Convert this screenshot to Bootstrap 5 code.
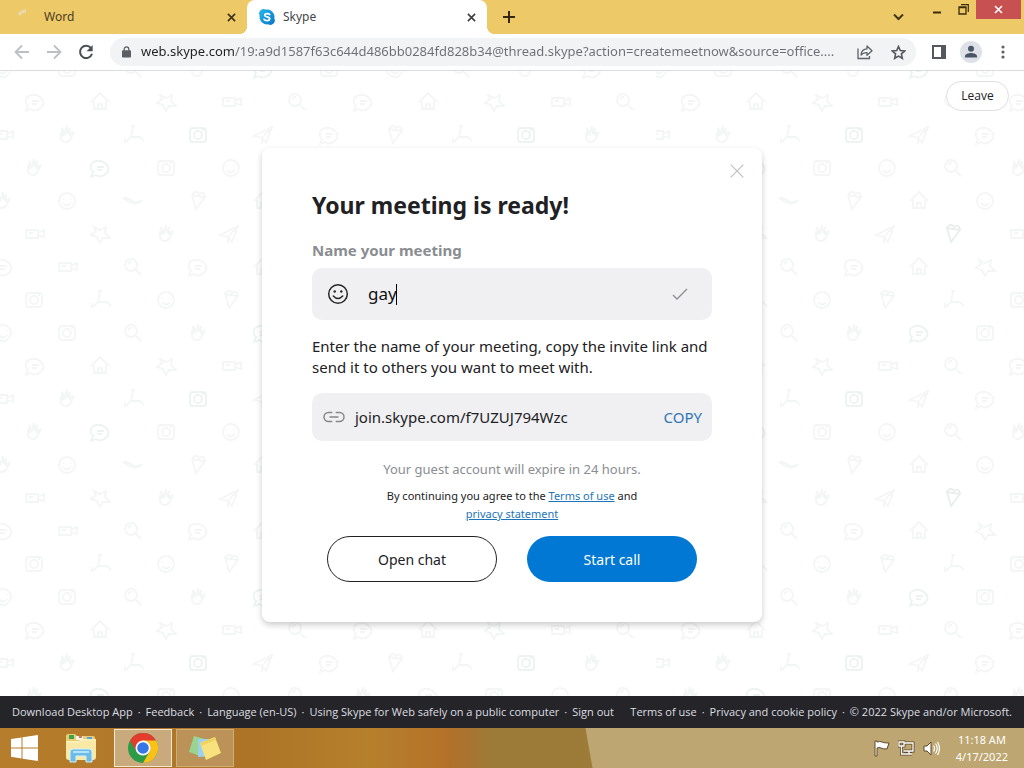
<!DOCTYPE html>
<html lang="en">
<head>
<meta charset="utf-8">
<meta name="viewport" content="width=device-width, initial-scale=1">
<title>Skype</title>
<link rel="stylesheet" href="https://cdn.jsdelivr.net/npm/bootstrap@5.3.0/dist/css/bootstrap.min.css">
<style>
  body { font-family: "Noto Sans", "Open Sans", sans-serif; color: #212124; background: #fff; }
  button { border: 0; background: none; padding: 0; color: inherit; }
  svg { display: block; flex: none; }

  .tabstrip { background: #eec967; height: 34px; font-size: 12px; color: #4a3d24; }
  .browser-tab { width: 240px; padding: 0 11px 0 12px; }
  .browser-tab.first { width: 247px; }
  .browser-tab.current { background: #fff; border-radius: 8px 8px 0 0; position: relative; color: #45474a; }
  .browser-tab.current::before, .browser-tab.current::after { content: ""; position: absolute; bottom: 0; width: 8px; height: 8px; }
  .browser-tab.current::before { left: -8px; background: radial-gradient(circle at 0 0, #eec967 8px, #fff 8px); }
  .browser-tab.current::after { right: -8px; background: radial-gradient(circle at 100% 0, #eec967 8px, #fff 8px); }
  .tab-search { padding: 0 8px; margin-right: 12px; }
  .win-btn { width: 26px; height: 19px; display: flex; justify-content: center; align-items: center; }
  .win-close { width: 45px; background: #c75050; margin-right: 3px; }

  .toolbar { height: 37px; border-bottom: 1px solid #dadce0; padding: 0 14px; color: #5f6368; }
  .omnibox { background: #f1f3f4; height: 28px; border-radius: 14px; padding: 0 10px 0 12px; gap: 10px; }
  .omnibox input { border: 0; outline: 0; padding: 0; font-size: 13px; min-width: 0;
    color: transparent; background: linear-gradient(to right, #202124 94px, #6b6f74 94px); background-clip: text; -webkit-background-clip: text; }
  .profile { width: 22px; height: 22px; border-radius: 50%; background: #dee1e8; overflow: hidden; margin: 0 14px; }

  .stage { padding: 27px 0 24px; }
  .doodles { position: absolute; top: 0; left: 0; width: 100%; height: 100%; }
  .leave { position: absolute; top: 10px; right: 15px; width: 63px; height: 30px; font-size: 12px; font-family: "Open Sans", sans-serif;
    background: #fff; border: 1px solid #dfdfe2; border-radius: 15px; }
  .meeting { width: 500px; max-width: 100%; padding: 40px 50px; background: #fff; border-radius: 8px; box-shadow: 0 3px 6px rgba(0,0,0,.2); position: relative; }
  .dismiss { position: absolute; top: 16px; right: 18px; }
  .meeting h1 { font-size: 23px; line-height: 34px; font-weight: 700; margin: 0 0 16px; }
  .meeting label { font-size: 15px; line-height: 24px; font-weight: 700; color: #8a8d91; margin-bottom: 6px; display: block; }
  .field { background: #f0f0f2; border-radius: 10px; }
  .field-name { height: 52px; padding: 0 24px 0 15px; }
  .name-box { margin-left: 19px; }
  .field-name input { border: 0; outline: 0; background: none; padding: 0; width: 100%; font-size: 17px; color: #111; caret-color: transparent; }
  .caret { position: absolute; left: 28px; top: 3px; width: 1px; height: 21px; background: #000; }
  .hint { font-size: 15px; line-height: 21px; margin: 16px 0 15px; }
  .field-link { height: 48px; padding: 0 10px 0 11px; font-size: 15px; gap: 10px; }
  .copy { color: #2f76b8; font-size: 15px; }
  .expire { font-size: 13px; line-height: 20px; color: #8a8d91; margin: 18px 0 8px; }
  .terms { font-size: 11px; line-height: 18px; width: 260px; margin: 0 auto 13px; }
  .terms a { color: #1e74b8; }
  .actions { padding: 0 15px; }
  .pill { width: 170px; height: 46px; border-radius: 23px; font-size: 14px; }
  .pill-line { border: 1px solid #212124; }
  .pill-blue { background: #0078d4; color: #fff; }

  .site-footer { background: #252529; min-height: 32px; padding: 0 12px; font-size: 11px; font-family: "Open Sans", sans-serif; }
  .site-footer nav { gap: 5px; }
  .site-footer a, .site-footer span { color: #dcdde0; text-decoration: none; white-space: nowrap; }

  .taskbar { position: relative; height: 40px; color: #fff;
    background: linear-gradient(80deg, transparent 0 583px, #bda671 584px) , linear-gradient(90deg, #b67d2c 0, #ad7427 25%, #b5802c 36%, #b5732a 43%, #b17029 44%, #9c7b39 48.2%, #9f7c38 100%); }
  .start { padding: 0 11px; }
  .tasks { gap: 4px; margin-left: 3px; }
  .task { width: 58px; height: 38px; display: flex; align-items: center; justify-content: center; border: 1px solid transparent; }
  .task-open { border-color: #d0ac77; background: #bb9257; }
  .task-active { border-color: #f5e9d4; background: #c8aa7c; }
  .clock { font-size: 11px; line-height: 17px; text-align: center; }
</style>
</head>
<body class="d-flex flex-column min-vh-100">

<header>
  <div class="tabstrip d-flex">
    <div class="browser-tab first d-flex align-items-center">
      <svg width="20" height="20" viewBox="0 0 20 20"><path d="M7 8q2-4 7-4" stroke="#ead9b0" stroke-width="3" fill="none"/></svg>
      <a href="#" class="flex-grow-1 text-reset text-decoration-none ms-2 ps-1">Word</a>
      <button type="button" aria-label="Close Word tab"><svg width="9" height="9" viewBox="0 0 10 10"><path d="M1 1l8 8M9 1L1 9" stroke="#3d321b" stroke-width="1.800"/></svg></button>
    </div>
    <div class="browser-tab current d-flex align-items-center">
      <svg width="16" height="16" viewBox="0 0 16 16"><defs><linearGradient id="sk" x2="1" y2="1"><stop stop-color="#28b9ee"/><stop offset="1" stop-color="#0873c8"/></linearGradient></defs><path d="M4.500 0a4.500 4.500 0 0 1 2.300.600A7.300 7.300 0 0 1 15.300 9.200 4.500 4.500 0 0 1 9.200 15.300 7.300 7.300 0 0 1 .700 6.800 4.500 4.500 0 0 1 4.500 0z" fill="url(#sk)"/><path d="M10.700 5.600C10 4.400 5.700 4.100 5.700 6.200c0 2.400 5 1 5 3.600 0 2.300-4.700 2.200-5.600.5" fill="none" stroke="#fff" stroke-width="1.700" stroke-linecap="round"/></svg>
      <a href="#" class="flex-grow-1 text-reset text-decoration-none ms-2">Skype</a>
      <button type="button" aria-label="Close Skype tab"><svg width="9" height="9" viewBox="0 0 10 10"><path d="M1 1l8 8M9 1L1 9" stroke="#3c4043" stroke-width="1.800"/></svg></button>
    </div>
    <button type="button" class="ms-3" aria-label="New tab"><svg width="12" height="12" viewBox="0 0 12 12"><path d="M6 0v12M0 6h12" stroke="#33280f" stroke-width="2"/></svg></button>
    <div class="ms-auto d-flex">
      <button type="button" class="tab-search" aria-label="Search tabs"><svg width="11" height="8" viewBox="0 0 11 8"><path d="M1 1.500l4.500 4.500L10 1.500" stroke="#42351b" stroke-width="2" fill="none"/></svg></button>
      <button type="button" class="win-btn" aria-label="Minimize"><svg width="10" height="10" viewBox="0 0 10 10"><path d="M1 7.500h8" stroke="#3a2c0c" stroke-width="2"/></svg></button>
      <button type="button" class="win-btn" aria-label="Restore"><svg width="11" height="11" viewBox="0 0 11 11"><path d="M1 3.500h7v6.500H1zM.5 3h8" stroke="#3a2c0c" stroke-width="1.300" fill="none"/><path d="M3 .7h7.300V8" stroke="#3a2c0c" stroke-width="1.200" fill="none"/></svg></button>
      <button type="button" class="win-btn win-close" aria-label="Close window"><svg width="9" height="9" viewBox="0 0 9 9"><path d="M1 1l7 7M8 1L1 8" stroke="#fff" stroke-width="1.600"/></svg></button>
    </div>
  </div>

  <div class="toolbar d-flex align-items-center">
    <button type="button" aria-label="Back"><svg width="16" height="16" viewBox="0 0 16 16"><path d="M15 8H2M8 1.500L1.500 8 8 14.500" fill="none" stroke="#bdbfc3" stroke-width="1.800"/></svg></button>
    <button type="button" class="ms-3" aria-label="Forward"><svg width="16" height="16" viewBox="0 0 16 16"><path d="M1 8h13M8 1.500L14.500 8 8 14.500" fill="none" stroke="#bdbfc3" stroke-width="1.800"/></svg></button>
    <button type="button" class="mx-3" aria-label="Reload"><svg width="16" height="16" viewBox="0 0 16 16"><path d="M13 4.200A6.100 6.100 0 1 0 14 9.700" fill="none" stroke="#4c5054" stroke-width="2"/><path d="M14.700 1v6.200H8.500z" fill="#4c5054"/></svg></button>
    <div class="omnibox d-flex align-items-center flex-grow-1">
      <svg width="9" height="12" viewBox="0 0 10 13"><rect y="4.500" width="10" height="8" rx="1" fill="#5b5f63"/><path d="M2.500 5V3.200a2.500 2.500 0 0 1 5 0V5" fill="none" stroke="#5b5f63" stroke-width="1.400"/></svg>
      <input type="text" class="flex-grow-1" aria-label="Address" value="web.skype.com/19:a9d1587f63c644d486bb0284fd828b34@thread.skype?action=createmeetnow&amp;source=office....">
      <button type="button" aria-label="Share"><svg width="16" height="16" viewBox="0 0 16 16"><path d="M1 4.500V14.500h11.500V12" fill="none" stroke="#5f6368" stroke-width="1.300"/><path d="M4 11c.3-4 2.400-6 6-6.200V2l5 4.700-5 4.600V8.600c-3 0-4.700.6-6 2.400z" fill="none" stroke="#5f6368" stroke-width="1.300" stroke-linejoin="round"/></svg></button>
      <button type="button" class="ms-2" aria-label="Bookmark"><svg width="15" height="15" viewBox="0 0 16 16"><path d="M8 1.600l1.900 4.300 4.700.5-3.500 3.100 1 4.700L8 11.800l-4.100 2.400 1-4.700L1.400 6.400l4.700-.5z" fill="none" stroke="#54585c" stroke-width="1.700"/></svg></button>
    </div>
    <button type="button" class="ms-3" aria-label="Side panel"><svg width="14" height="14" viewBox="0 0 14 14"><path d="M1 1h12v12H1z" fill="none" stroke="#55585c" stroke-width="2"/><path d="M9 0h5v14H9z" fill="#55585c"/></svg></button>
    <button type="button" class="profile" aria-label="Profile"><svg width="22" height="22" viewBox="0 0 22 22"><circle cx="11" cy="7.700" r="3" fill="#4a5568"/><path d="M5 16.500v-1.300c0-2.200 3.500-3.200 6-3.200s6 1 6 3.200v1.300z" fill="#4a5568"/></svg></button>
    <button type="button" aria-label="Menu"><svg width="14" height="14" viewBox="0 0 14 14"><g fill="#5f6368"><circle cx="7" cy="2" r="1.600"/><circle cx="7" cy="7" r="1.600"/><circle cx="7" cy="12" r="1.600"/></g></svg></button>
  </div>
</header>

<main class="stage position-relative flex-grow-1 d-flex align-items-center justify-content-center">
  <svg class="doodles" aria-hidden="true">
    <defs>
      <g id="chat"><path d="M-8-5q8-5 14 1t-2 11q-4 3-8 0l-5 2 2-5q-4-4-1-9M-3-1h7M-3 2h5"/></g>
      <g id="house"><path d="M-9 0L0-9 9 0M-6-1v8H6v-8M-2 7V2h4v5"/></g>
      <g id="star"><path d="M-6-7l6 3 6-3-1 6 5 5-7 0-3 5-3-6-6-2 5-4z"/></g>
      <g id="cam"><path d="M-8-4H4v8H-8zM4-1l6-3v7L4 1M-5-1h4"/></g>
      <g id="lens"><circle cx="-2" cy="-2" r="6"/><path d="M3 3l5 5M-5-3q2-3 4-2"/></g>
      <g id="face"><circle r="8"/><path d="M-4-2h1M3-2h1M-4 2q4 5 8 0"/></g>
      <g id="plane"><path d="M-9 1L9-8 3 8-1 3zM-1 3L9-8M-1 3v6"/></g>
      <g id="photo"><rect x="-8" y="-7" width="16" height="14" rx="3"/><circle r="4"/><path d="M4-5h2"/></g>
      <g id="cone"><path d="M-6-6L-2 8 7-4zM-6-6q4-6 7-1 5-4 6 3"/></g>
      <g id="wave"><path d="M-10-3q6 0 9 3t10-1q-5 5-10 3t-9-5"/></g>
      <g id="branch"><path d="M0-9L-2 2l-5 5M-2 2l9 0 4 4M-2-9h4M-8 3v5"/></g>
      <g id="hand"><path d="M-6-3v7q4 6 9 1l4-8-4 3V-7l-2 6-1-8-2 8-3-6 1 8z"/></g>
      <pattern id="tile" x="0" y="14" width="656" height="264" patternUnits="userSpaceOnUse">
        <g fill="none" stroke="#f4f5f5" stroke-width="1.800">
          <use href="#chat" x="35" y="17"/><use href="#house" x="100" y="17"/><use href="#star" x="166" y="17"/><use href="#cam" x="231" y="17"/><use href="#lens" x="297" y="17"/><use href="#chat" x="363" y="17"/><use href="#house" x="428" y="17"/><use href="#star" x="494" y="17"/><use href="#cam" x="560" y="17"/><use href="#lens" x="625" y="17"/>
          <use href="#cam" x="3" y="50"/><use href="#hand" x="67" y="50"/><use href="#branch" x="133" y="50"/><use href="#photo" x="198" y="50" stroke="#eff2f2"/><use href="#plane" x="263" y="50"/><use href="#chat" x="329" y="50"/><use href="#cone" x="395" y="50"/><use href="#branch" x="461" y="50"/><use href="#photo" x="526" y="50" stroke="#eff2f2"/><use href="#hand" x="592" y="50"/>
          <use href="#hand" x="34" y="83"/><use href="#chat" x="100" y="83" stroke="#eff2f2"/><use href="#photo" x="166" y="83"/><use href="#face" x="231" y="83"/><use href="#lens" x="297" y="83"/><use href="#hand" x="363" y="83"/><use href="#chat" x="428" y="83"/><use href="#photo" x="494" y="83"/><use href="#face" x="560" y="83"/><use href="#lens" x="625" y="83"/>
          <use href="#hand" x="3" y="116"/><use href="#face" x="67" y="116"/><use href="#wave" x="133" y="116"/><use href="#cone" x="198" y="116"/><use href="#house" x="263" y="116"/><use href="#face" x="329" y="116"/><use href="#wave" x="395" y="116"/><use href="#cone" x="461" y="116"/><use href="#branch" x="526" y="116"/><use href="#lens" x="592" y="116"/>
          <use href="#cam" x="34" y="149"/><use href="#star" x="100" y="149"/><use href="#hand" x="166" y="149"/><use href="#plane" x="229" y="149"/><use href="#cone" x="297" y="149" stroke="#e8eeed"/><use href="#cam" x="363" y="149"/><use href="#star" x="428" y="149"/><use href="#hand" x="494" y="149"/><use href="#plane" x="560" y="149"/><use href="#cone" x="625" y="149"/>
          <use href="#chat" x="3" y="182"/><use href="#cam" x="67" y="182"/><use href="#lens" x="133" y="182"/><use href="#chat" x="198" y="182"/><use href="#house" x="263" y="182"/><use href="#star" x="329" y="182"/><use href="#cam" x="395" y="182"/><use href="#lens" x="461" y="182"/><use href="#chat" x="526" y="182"/><use href="#house" x="592" y="182"/>
          <use href="#photo" x="34" y="215"/><use href="#branch" x="100" y="215"/><use href="#face" x="166" y="215"/><use href="#cone" x="231" y="215"/><use href="#branch" x="297" y="215"/><use href="#photo" x="363" y="215"/><use href="#plane" x="428" y="215"/><use href="#face" x="494" y="215"/><use href="#hand" x="560" y="215"/><use href="#branch" x="625" y="215"/>
          <use href="#face" x="3" y="248"/><use href="#photo" x="67" y="248"/><use href="#lens" x="133" y="248"/><use href="#hand" x="198" y="248"/><use href="#chat" x="263" y="248" stroke="#eff2f2"/><use href="#photo" x="329" y="248"/><use href="#face" x="395" y="248"/><use href="#lens" x="461" y="248"/><use href="#hand" x="526" y="248"/><use href="#chat" x="592" y="248"/>
        </g>
      </pattern>
    </defs>
    <rect width="100%" height="100%" fill="url(#tile)"/>
  </svg>
  <button type="button" class="leave">Leave</button>

  <section class="meeting" role="dialog" aria-labelledby="meeting-title">
    <button type="button" class="dismiss" aria-label="Close"><svg width="14" height="14" viewBox="0 0 14 14"><path d="M.7.7l12.600 12.600M13.300.7L.7 13.300" stroke="#bfc0c2" stroke-width="1.200"/></svg></button>
    <h1 id="meeting-title">Your meeting is ready!</h1>
    <label for="meeting-name">Name your meeting</label>
    <div class="field field-name d-flex align-items-center">
      <svg width="22" height="22" viewBox="0 0 22 22"><circle cx="11" cy="11" r="9.300" fill="none" stroke="#26262a" stroke-width="1.500"/><circle cx="7.700" cy="8.500" r="1.200" fill="#26262a"/><circle cx="14.300" cy="8.500" r="1.200" fill="#26262a"/><path d="M6.300 13q4.700 5 9.400 0" fill="none" stroke="#26262a" stroke-width="1.500" stroke-linecap="round"/></svg>
      <div class="name-box position-relative flex-grow-1">
        <input type="text" id="meeting-name" value="gay"><span class="caret"></span>
      </div>
      <svg width="16" height="12" viewBox="0 0 16 12"><path d="M1 7l4 4L15 1" fill="none" stroke="#8a8d91" stroke-width="1.300"/></svg>
    </div>
    <p class="hint">Enter the name of your meeting, copy the invite link and send it to others you want to meet with.</p>
    <div class="field field-link d-flex align-items-center">
      <svg width="22" height="12" viewBox="0 0 22 12"><path d="M9.300 1.500H5.500a4.500 4.500 0 0 0 0 9h3.800M12.700 1.500h3.800a4.500 4.500 0 0 1 0 9h-3.800M6.500 6h9" fill="none" stroke="#85878b" stroke-width="1.500"/></svg>
      <span class="flex-grow-1">join.skype.com/f7UZUJ794Wzc</span>
      <button type="button" class="copy">COPY</button>
    </div>
    <p class="expire text-center">Your guest account will expire in 24 hours.</p>
    <p class="terms text-center">By continuing you agree to the <a href="#">Terms of use</a> and <a href="#">privacy statement</a></p>
    <div class="actions d-flex justify-content-between">
      <button type="button" class="pill pill-line">Open chat</button>
      <button type="button" class="pill pill-blue">Start call</button>
    </div>
  </section>
</main>

<footer>
  <div class="site-footer d-flex flex-wrap align-items-center justify-content-between">
    <nav class="d-flex flex-wrap" aria-label="Skype">
      <a href="#">Download Desktop App</a><span>·</span><a href="#">Feedback</a><span>·</span><a href="#">Language (en-US)</a><span>·</span><a href="#">Using Skype for Web safely on a public computer</a><span>·</span><a href="#">Sign out</a>
    </nav>
    <nav class="d-flex flex-wrap" aria-label="Legal">
      <a href="#">Terms of use</a><span>·</span><a href="#">Privacy and cookie policy</a><span>·</span><span>© 2022 Skype and/or Microsoft.</span>
    </nav>
  </div>
  <div class="taskbar d-flex align-items-center">
    <button type="button" class="start" aria-label="Start"><svg width="27" height="26" viewBox="0 0 27 26"><path d="M0 4l10.500-1.600v10H0zM11.500 2.200L27 0v12.400H11.500zM0 13.400h10.500v10L0 21.800zM11.500 13.400H27V26l-15.500-2.300z" fill="#fff"/></svg></button>
    <div class="tasks d-flex">
    <button type="button" class="task" aria-label="File Explorer"><svg width="32" height="30" viewBox="0 0 32 30"><path d="M1 3q0-2 2-2h7l2 2h16q2 0 2 2v19q0 2-2 2H3q-2 0-2-2z" fill="#e8ce73"/><path d="M4 2h5v4H4z" fill="#3fa14d"/><path d="M11 3h7v4h-7z" fill="#f8f5e8"/><path d="M14 4h3" stroke="#c05030" stroke-width="1.500"/><path d="M22 4h5v4h-5z" fill="#58a5dc"/><path d="M1 8h13l3-2h14v18q0 3-3 3H4q-3 0-3-3z" fill="#fae9a4"/><path d="M2 9h12l3-2h13" stroke="#fff6cd" fill="none"/><path d="M5 29V19q0-3 3-3h16q3 0 3 3v10h-6v-6H11v6z" fill="#6cbce8" stroke="#d4f0fc"/><path d="M8 19h16" stroke="#b5e4fa" stroke-width="2"/></svg></button>
    <button type="button" class="task task-active" aria-label="Google Chrome"><svg width="30" height="30" viewBox="0 0 30 30"><circle cx="15" cy="15" r="15" fill="#2c9b47"/><path d="M2 7.500A15 15 0 0 1 28 7.500L15 9z" fill="#e33b2e"/><path d="M2 7.500L8.500 18.700 15 8z" fill="#e33b2e"/><path d="M28 7.500H15l6.500 11.200L15 30A15 15 0 0 0 28 7.500z" fill="#fbc116"/><circle cx="15" cy="15" r="7.500" fill="#fff"/><circle cx="15" cy="15" r="5.800" fill="#3577e5"/></svg></button>
    <button type="button" class="task task-open" aria-label="Sticky Notes"><svg width="34" height="28" viewBox="0 0 34 28"><path d="M6 2l14 4-5 17-14-5z" fill="#99d493"/><path d="M10 5l13 0 1 17-14 1z" fill="#9cd0ed"/><path d="M12 9l15-6 6 16-15 7z" fill="#f7e27d"/><path d="M12 9l15-6 1 3-15 6z" fill="#eed362"/></svg></button>
    </div>
    <div class="ms-auto d-flex align-items-center me-3">
      <svg class="me-2" width="17" height="17" viewBox="0 0 17 17"><path d="M2 1h2v1q3-1 5 0t7 1l-2 6q-4 0-6-1T4 8v8H2z" fill="#fff" stroke="#5e4b2c"/></svg>
      <svg class="me-2" width="17" height="17" viewBox="0 0 17 17"><path d="M6 3h9v8H6M8 14h6M11 11v3M1 2h5v4H1zM3.500 6v8H8" fill="none" stroke="#5e4b2c" stroke-width="3"/><path d="M6 3h9v8H6M8 14h6M11 11v3M1 2h5v4H1zM3.500 6v8H8" fill="none" stroke="#fff" stroke-width="1.300"/></svg>
      <svg class="me-3" width="17" height="17" viewBox="0 0 17 17"><path d="M1 6h3l4-4v13l-4-4H1z" fill="#fff" stroke="#5e4b2c"/><path d="M10.500 5.500q2 3 0 6M12.500 3.500q3.500 5 0 10M14.500 2q4 6.500 0 13" fill="none" stroke="#fff" stroke-width="1.200"/></svg>
      <div class="clock"><div>11:18 AM</div><div>4/17/2022</div></div>
    </div>
  </div>
</footer>

<script src="https://cdn.jsdelivr.net/npm/bootstrap@5.3.0/dist/js/bootstrap.bundle.min.js"></script>
</body>
</html>
